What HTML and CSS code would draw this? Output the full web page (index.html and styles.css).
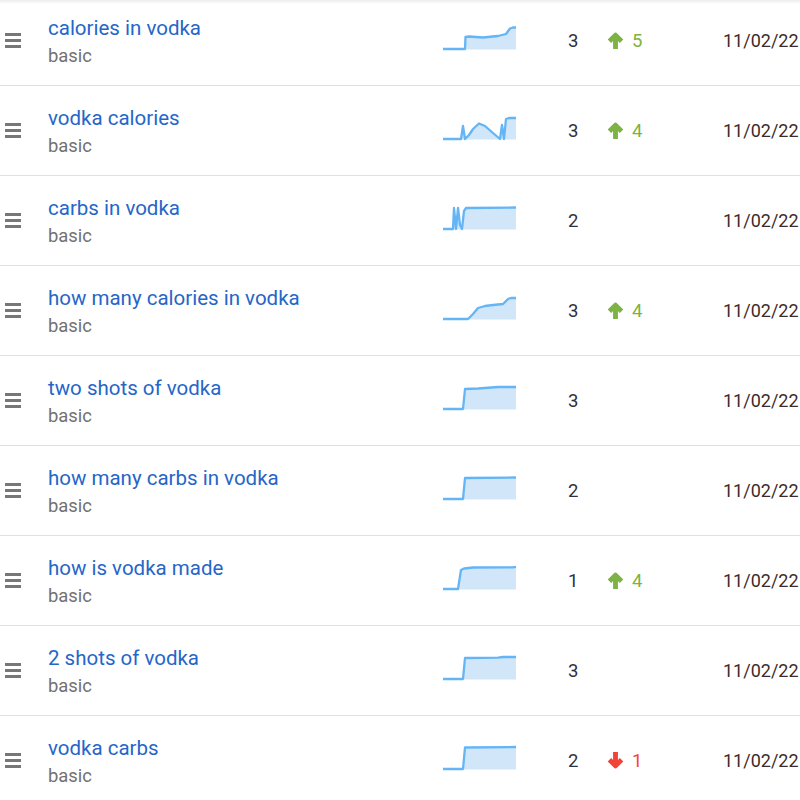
FILE: index.html
```html
<!DOCTYPE html>
<html lang="en">
<head>
  <meta charset="UTF-8">
  <title>Keyword Rankings</title>
  <link rel="stylesheet" href="styles.css">
</head>
<body>
  <div class="top-fade"></div>
  <div class="list">

    <div class="row">
      <div class="handle"><span></span><span></span><span></span></div>
      <div class="keyword">
        <a class="term" href="#">calories in vodka</a>
        <div class="type">basic</div>
      </div>
      <svg class="spark" viewBox="0 0 74 26">
        <path class="area" d="M0 24 L22 24 L22.5 12 L26 11.5 L40 12.5 L55 11 L63 9 L67 3.5 L70 2.5 L73 2.5 L73 24.5 L0 24.5 Z"/>
        <path class="line" d="M0 24 L22 24 L22.5 12 L26 11.5 L40 12.5 L55 11 L63 9 L67 3.5 L70 2.5 L73 2.5"/>
      </svg>
      <div class="pos">3</div>
      <div class="change up">
        <svg viewBox="0 0 14 14"><path d="M2 7.6 L7 2.6 L12 7.6 M7 3.5 V14"/></svg>
        <span>5</span>
      </div>
      <div class="date">11/02/22</div>
    </div>

    <div class="row">
      <div class="handle"><span></span><span></span><span></span></div>
      <div class="keyword">
        <a class="term" href="#">vodka calories</a>
        <div class="type">basic</div>
      </div>
      <svg class="spark" viewBox="0 0 74 26">
        <path class="area" d="M0 24 L18 24 L20 11 L22 24 L26 20 L30 14 L36 8.5 L42 11 L50 18 L57 24 L59 10 L61 24 L63 4 L66 3 L73 3 L73 24.5 L0 24.5 Z"/>
        <path class="line" d="M0 24 L18 24 L20 11 L22 24 L26 20 L30 14 L36 8.5 L42 11 L50 18 L57 24 L59 10 L61 24 L63 4 L66 3 L73 3"/>
      </svg>
      <div class="pos">3</div>
      <div class="change up">
        <svg viewBox="0 0 14 14"><path d="M2 7.6 L7 2.6 L12 7.6 M7 3.5 V14"/></svg>
        <span>4</span>
      </div>
      <div class="date">11/02/22</div>
    </div>

    <div class="row">
      <div class="handle"><span></span><span></span><span></span></div>
      <div class="keyword">
        <a class="term" href="#">carbs in vodka</a>
        <div class="type">basic</div>
      </div>
      <svg class="spark" viewBox="0 0 74 26">
        <path class="area" d="M0 24 L10 24 L11 3 L13 24 L15 3 L17 20 L19 24 L21 6 L23 3 L73 2.5 L73 24.5 L0 24.5 Z"/>
        <path class="line" d="M0 24 L10 24 L11 3 L13 24 L15 3 L17 20 L19 24 L21 6 L23 3 L73 2.5"/>
      </svg>
      <div class="pos">2</div>
      <div class="change"></div>
      <div class="date">11/02/22</div>
    </div>

    <div class="row">
      <div class="handle"><span></span><span></span><span></span></div>
      <div class="keyword">
        <a class="term" href="#">how many calories in vodka</a>
        <div class="type">basic</div>
      </div>
      <svg class="spark" viewBox="0 0 74 26">
        <path class="area" d="M0 24 L25 24 L30 19 L35 13 L42 11 L50 10 L60 9 L65 4 L68 3 L73 3 L73 24.5 L0 24.5 Z"/>
        <path class="line" d="M0 24 L25 24 L30 19 L35 13 L42 11 L50 10 L60 9 L65 4 L68 3 L73 3"/>
      </svg>
      <div class="pos">3</div>
      <div class="change up">
        <svg viewBox="0 0 14 14"><path d="M2 7.6 L7 2.6 L12 7.6 M7 3.5 V14"/></svg>
        <span>4</span>
      </div>
      <div class="date">11/02/22</div>
    </div>

    <div class="row">
      <div class="handle"><span></span><span></span><span></span></div>
      <div class="keyword">
        <a class="term" href="#">two shots of vodka</a>
        <div class="type">basic</div>
      </div>
      <svg class="spark" viewBox="0 0 74 26">
        <path class="area" d="M0 24 L20 24 L22 4 L35 3.5 L55 2 L73 2 L73 24.5 L0 24.5 Z"/>
        <path class="line" d="M0 24 L20 24 L22 4 L35 3.5 L55 2 L73 2"/>
      </svg>
      <div class="pos">3</div>
      <div class="change"></div>
      <div class="date">11/02/22</div>
    </div>

    <div class="row">
      <div class="handle"><span></span><span></span><span></span></div>
      <div class="keyword">
        <a class="term" href="#">how many carbs in vodka</a>
        <div class="type">basic</div>
      </div>
      <svg class="spark" viewBox="0 0 74 26">
        <path class="area" d="M0 24 L20 24 L22 3 L73 2.5 L73 24.5 L0 24.5 Z"/>
        <path class="line" d="M0 24 L20 24 L22 3 L73 2.5"/>
      </svg>
      <div class="pos">2</div>
      <div class="change"></div>
      <div class="date">11/02/22</div>
    </div>

    <div class="row">
      <div class="handle"><span></span><span></span><span></span></div>
      <div class="keyword">
        <a class="term" href="#">how is vodka made</a>
        <div class="type">basic</div>
      </div>
      <svg class="spark" viewBox="0 0 74 26">
        <path class="area" d="M0 24 L15 24 L18 5 L21 3.5 L30 2.5 L70 2.3 L73 1.8 L73 24.5 L0 24.5 Z"/>
        <path class="line" d="M0 24 L15 24 L18 5 L21 3.5 L30 2.5 L70 2.3 L73 1.8"/>
      </svg>
      <div class="pos">1</div>
      <div class="change up">
        <svg viewBox="0 0 14 14"><path d="M2 7.6 L7 2.6 L12 7.6 M7 3.5 V14"/></svg>
        <span>4</span>
      </div>
      <div class="date">11/02/22</div>
    </div>

    <div class="row">
      <div class="handle"><span></span><span></span><span></span></div>
      <div class="keyword">
        <a class="term" href="#">2 shots of vodka</a>
        <div class="type">basic</div>
      </div>
      <svg class="spark" viewBox="0 0 74 26">
        <path class="area" d="M0 24 L20 24 L22 3 L55 2.6 L60 2 L73 2 L73 24.5 L0 24.5 Z"/>
        <path class="line" d="M0 24 L20 24 L22 3 L55 2.6 L60 2 L73 2"/>
      </svg>
      <div class="pos">3</div>
      <div class="change"></div>
      <div class="date">11/02/22</div>
    </div>

    <div class="row">
      <div class="handle"><span></span><span></span><span></span></div>
      <div class="keyword">
        <a class="term" href="#">vodka carbs</a>
        <div class="type">basic</div>
      </div>
      <svg class="spark" viewBox="0 0 74 26">
        <path class="area" d="M0 24 L20 24 L22 2.5 L73 2 L73 24.5 L0 24.5 Z"/>
        <path class="line" d="M0 24 L20 24 L22 2.5 L73 2"/>
      </svg>
      <div class="pos">2</div>
      <div class="change down">
        <svg viewBox="0 0 14 14"><path d="M2 6.4 L7 11.4 L12 6.4 M7 10.5 V0"/></svg>
        <span>1</span>
      </div>
      <div class="date">11/02/22</div>
    </div>

  </div>
</body>
</html>
```

FILE: styles.css
```css
body {
  margin: 0;
  background: #fff;
  font-family: Roboto, "Liberation Sans", sans-serif;
  overflow: hidden;
}
.top-fade {
  position: fixed;
  top: 0;
  left: 0;
  right: 0;
  height: 4px;
  background: linear-gradient(#ececec, rgba(255, 255, 255, 0));
  z-index: 2;
}
.list {
  margin-top: -4px;
}
.row {
  display: flex;
  align-items: center;
  height: 89px;
  border-bottom: 1px solid #e0e0e0;
  white-space: nowrap;
}
.handle {
  width: 43px;
  padding-left: 5px;
  display: flex;
  flex-direction: column;
  gap: 3px;
}
.handle span {
  display: block;
  width: 16px;
  height: 3px;
  background: #777;
}
.keyword {
  width: 395px;
  padding-top: 2px;
  display: flex;
  flex-direction: column;
}
.term {
  color: #2566c8;
  text-decoration: none;
  font-size: 20.5px;
  line-height: 27px;
}
.type {
  color: #717171;
  font-size: 18.4px;
  line-height: 27px;
}
.spark {
  width: 74px;
  height: 26px;
  margin-bottom: 5px;
  flex: none;
}
.spark .area {
  fill: #d2e6fa;
}
.spark .line {
  fill: none;
  stroke: #64b5f6;
  stroke-width: 2.3;
  stroke-linejoin: round;
}
.pos {
  width: 39px;
  padding-left: 51px;
  font-size: 18.5px;
  color: #2d3142;
}
.change {
  width: 116px;
  display: flex;
  align-items: center;
  gap: 8px;
  font-size: 18.5px;
}
.change svg {
  width: 17px;
  height: 17px;
  fill: none;
  stroke-width: 4;
  stroke-linejoin: round;
}
.change.up {
  color: #7cb342;
}
.change.up svg {
  stroke: #7cb342;
}
.change.down {
  color: #f44336;
}
.change.down svg {
  stroke: #f44336;
}
.date {
  font-size: 18px;
  color: #3f2a2a;
}
```
